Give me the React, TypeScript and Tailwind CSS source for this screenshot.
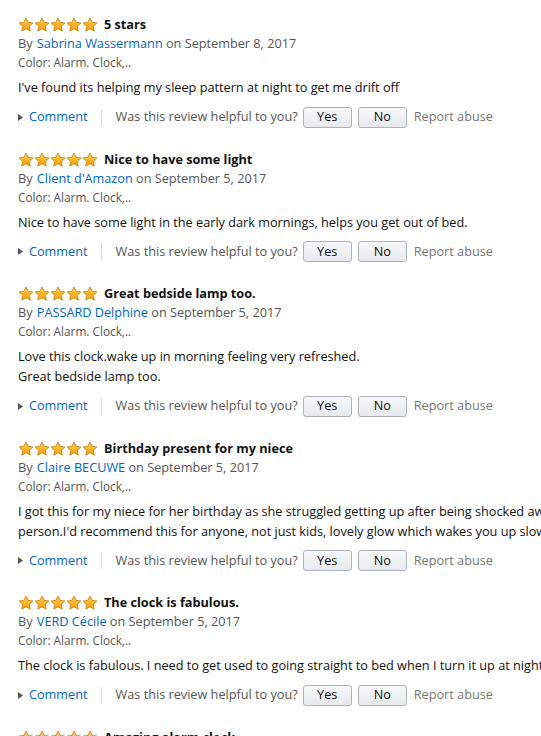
import React from "react";

type Review = {
  title: string;
  author: string;
  date: string;
  body: string[];
};

const reviews: Review[] = [
  {
    title: "5 stars",
    author: "Sabrina Wassermann",
    date: "September 8, 2017",
    body: ["I've found its helping my sleep pattern at night to get me drift off"],
  },
  {
    title: "Nice to have some light",
    author: "Client d'Amazon",
    date: "September 5, 2017",
    body: ["Nice to have some light in the early dark mornings, helps you get out of bed."],
  },
  {
    title: "Great bedside lamp too.",
    author: "PASSARD Delphine",
    date: "September 5, 2017",
    body: ["Love this clock.wake up in morning feeling very refreshed.", "Great bedside lamp too."],
  },
  {
    title: "Birthday present for my niece",
    author: "Claire BECUWE",
    date: "September 5, 2017",
    body: [
      "I got this for my niece for her birthday as she struggled getting up after being shocked awake by her alarm. She is now a happier",
      "person.I'd recommend this for anyone, not just kids, lovely glow which wakes you up slowly and gently.",
    ],
  },
  {
    title: "The clock is fabulous.",
    author: "VERD Cécile",
    date: "September 5, 2017",
    body: ["The clock is fabulous. I need to get used to going straight to bed when I turn it up at night though!"],
  },
  {
    title: "Amazing alarm clock",
    author: "Amazon Customer",
    date: "September 4, 2017",
    body: ["Amazing alarm clock, really helps in the morning."],
  },
];

function Star({ id }: { id: string }) {
  return (
    <svg width="16" height="16" viewBox="0 0 16 16" className="block">
      <defs>
        <linearGradient id={id} x1="0" y1="0" x2="0" y2="1">
          <stop offset="0" stopColor="#ffd65a" />
          <stop offset="0.55" stopColor="#ffb22a" />
          <stop offset="1" stopColor="#f59a0e" />
        </linearGradient>
      </defs>
      <path
        d="M8 1 L10.1 5.4 L14.9 6 L11.35 9.3 L12.25 14.1 L8 11.75 L3.75 14.1 L4.65 9.3 L1.1 6 L5.9 5.4 Z"
        fill={`url(#${id})`}
        stroke="#cf8410"
        strokeWidth="0.9"
        strokeLinejoin="round"
      />
    </svg>
  );
}

function Stars({ idx }: { idx: number }) {
  return (
    <div className="flex">
      {[0, 1, 2, 3, 4].map((i) => (
        <Star key={i} id={`g${idx}-${i}`} />
      ))}
    </div>
  );
}

function Btn({ label }: { label: string }) {
  return (
    <div className="flex h-[21px] w-[49px] items-center justify-center rounded-[3px] border border-[#adb1b8] bg-gradient-to-b from-[#f7f8fa] to-[#e7e9ec] text-[12.7px] text-[#111]">
      {label}
    </div>
  );
}

function ReviewItem({ r, idx }: { r: Review; idx: number }) {
  return (
    <div className="mb-[22.5px]">
      <div className="flex h-[18px] items-center gap-[6px]">
        <Stars idx={idx} />
        <span className="text-[12.7px] font-bold text-[#111]">{r.title}</span>
      </div>
      <div className="text-[12.7px] leading-[19px] text-[#555]">
        By <span className="ml-[1px] text-[#0066c0]">{r.author}</span> on {r.date}
      </div>
      <div className="text-[11.8px] leading-[19px] text-[#555]">Color: Alarm. Clock,..</div>
      <div className="mt-[5px] text-[12.7px] leading-[20px] text-[#111]">
        {r.body.map((line, i) => (
          <div key={i} className="whitespace-nowrap">
            {line}
          </div>
        ))}
      </div>
      <div className="mt-[9px] flex h-[22px] items-center whitespace-nowrap text-[12.7px]">
        <svg width="5" height="7" viewBox="0 0 5 7" className="mr-[6px]">
          <path d="M0 0 L5 3.5 L0 7 Z" fill="#555" />
        </svg>
        <span className="text-[#0066c0]">Comment</span>
        <span className="ml-[13px] mr-[14px] h-[17px] w-px bg-[#ddd]" />
        <span className="text-[#555]">Was this review helpful to you?</span>
        <div className="ml-[5px] flex gap-[6px]">
          <Btn label="Yes" />
          <Btn label="No" />
        </div>
        <span className="ml-[7px] text-[#767676]">Report abuse</span>
      </div>
    </div>
  );
}

export default function App() {
  return (
    <div
      className="h-[736px] w-[541px] overflow-hidden bg-white pl-[18px] pt-[16px]"
      style={{ fontFamily: '"Open Sans", "Noto Sans", sans-serif' }}
    >
      {reviews.map((r, i) => (
        <ReviewItem key={i} r={r} idx={i} />
      ))}
    </div>
  );
}
